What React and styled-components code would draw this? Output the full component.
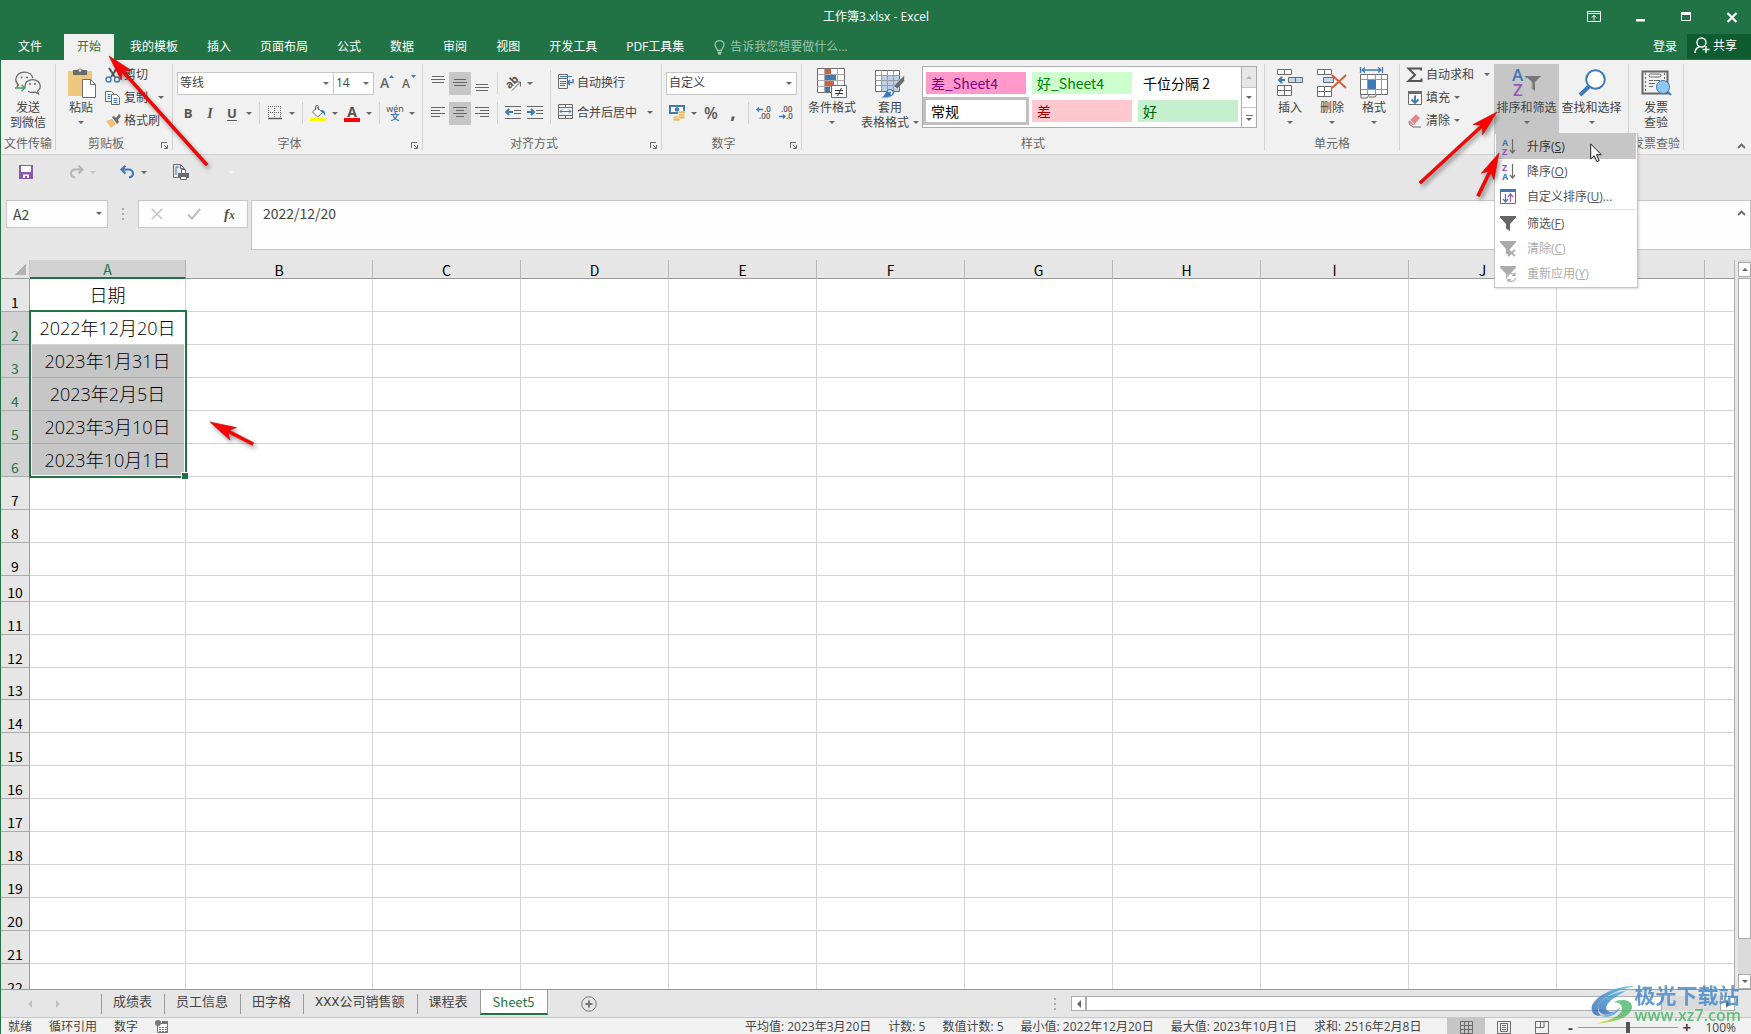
import React from 'react';
import styled, { createGlobalStyle, css } from 'styled-components';

const GREEN = '#217346';
const BLUE = '#3f7ab5';
const GREY = '#6b6b6b';

const GlobalStyle = createGlobalStyle`
  * {
    box-sizing: border-box;
  }

  body {
    margin: 0;
    overflow: hidden;
    color: #444;
    font-family: 'Open Sans', 'Noto Sans CJK SC', sans-serif;
    font-size: 12px;
    line-height: 15px;
  }

  button, input, select, textarea {
    margin: 0;
    padding: 0;
    border: 0;
    border-radius: 0;
    outline: 0;
    background: none;
    color: inherit;
    font: inherit;
  }

  svg {
    display: block;
    flex-shrink: 0;
    overflow: visible;
  }
`;

/* ---------- icons ---------- */

const Icon = ({ w = 16, h = 16, children, ...rest }) => (
  <svg width={w} height={h} viewBox={`0 0 ${w} ${h}`} fill="none" aria-hidden="true" {...rest}>
    {children}
  </svg>
);

const WechatIcon = () => (
  <Icon w={26} h={24} stroke={GREY} strokeWidth="1.3">
    <path d="M4 14.5C1.500 12.500 .8 10.500.8 8.500.8 4.300 4.500 1.200 9.300 1.200c4.300 0 7.700 2.500 8.500 6" />
    <path d="M2.800 13.800L2 16.500" />
    <path d="M13 20.200c1.200.8 2.800 1.300 4.500 1.300 1 0 1.800-.1 2.700-.4l3.300 1.700-.8-2.800c1.700-1.200 2.600-2.900 2.600-4.800 0-3.700-3.400-6.600-7.700-6.600s-7.700 2.900-7.700 6.600c0 .8.1 1.400.3 2" />
    <path d="M0 17h9.500M6.500 13.800L9.800 17l-3.300 3.200" stroke="#3fa05a" />
    <g fill={GREY} stroke="none">
      <circle cx="6.500" cy="6.500" r="1" />
      <circle cx="12" cy="6.500" r="1" />
      <circle cx="15" cy="13" r="1" />
      <circle cx="20" cy="13" r="1" />
    </g>
  </Icon>
);

const PasteIcon = () => (
  <Icon w={29} h={32}>
    <path d="M1 4h24v25H1z" fill="#eec77f" />
    <path d="M6 3h4.500a2.800 2.800 0 015 0H20v5H6z" fill="#6b6b6b" />
    <circle cx="13" cy="3.500" r="1.200" fill="#f1f1f1" />
    <path d="M15.500 12.500h8l5 5v13h-13z" fill="#fff" stroke={GREY} />
    <path d="M23.500 12.500v5h5" stroke={GREY} />
  </Icon>
);

const CutIcon = () => (
  <Icon>
    <path d="M4 1l6 9M12 1L6 10" stroke="#555" strokeWidth="2" />
    <circle cx="3.500" cy="12.500" r="2.500" stroke={BLUE} strokeWidth="1.400" />
    <circle cx="12" cy="12.500" r="2.500" stroke={BLUE} strokeWidth="1.400" />
  </Icon>
);

const CopyIcon = () => (
  <Icon>
    <path d="M.5 1.500h6l2 2v8h-8z" fill="#fff" stroke={GREY} />
    <path d="M2.500 4.500h3M2.500 6.500h3M2.500 8.500h3" stroke={BLUE} />
    <path d="M6.500 4.500h5l3 3v7h-8z" fill="#fff" stroke={GREY} />
    <path d="M8.500 8.500h4M8.500 10.500h4M8.500 12.500h4" stroke={BLUE} />
  </Icon>
);

const BrushIcon = () => (
  <Icon>
    <path d="M1 8l6-2 4 5-5 4z" fill="#eec077" />
    <path d="M7 4l2-1 2 2 3-4 2 2-3 4 1 2-2 2z" fill={GREY} />
  </Icon>
);

const LauncherIcon = () => (
  <Icon w={7} h={7} stroke={GREY}>
    <path d="M.5 6V.5H6M3 3l3 3M6.500 3v3.500H3" />
  </Icon>
);

const BorderIcon = () => (
  <Icon w={14} h={14} stroke="#666">
    <path d="M.5 0v12M6.500 0v12M12.500 0v12M0 .5h13M0 6.500h13" strokeDasharray="1 1" />
    <path d="M0 12.500h14" stroke="#555" strokeWidth="1.400" />
  </Icon>
);

const FillIcon = () => (
  <Icon>
    <path d="M7 2.500l5.500 5-5 4.500L2.500 7z" fill="#fff" stroke={GREY} />
    <path d="M5.500 5V2a1.500 1.500 0 013 0v3" stroke={GREY} />
    <path d="M11 5c3-.5 5 2 4 6-1-1.500-1-3-3-3.500z" fill={BLUE} />
    <path d="M0 12.500h16v3.500H0z" fill="#ff0" />
  </Icon>
);

const LinesIcon = ({ lines }) => (
  <Icon w={14} h={16} stroke="#666">
    {lines.map(([x1, x2, y]) => (
      <path key={y} d={`M${x1} ${y + 0.5}H${x2}`} />
    ))}
  </Icon>
);

const OrientationIcon = () => (
  <Icon>
    <text x="1" y="10" fontSize="11" fontWeight="700" fill="#555" transform="rotate(-45 8 8)">ab</text>
    <path d="M7 15.500L15 7.500M11 7h4.500v4.500" stroke={GREY} />
  </Icon>
);

const IndentIcon = ({ flip }) => (
  <Icon>
    <path d="M0 1.500h16M9 5.500h7M9 8.500h7M0 13.500h16" stroke="#666" />
    <path d={flip ? 'M0 7h7M4 4l3.200 3L4 10' : 'M1 7h7M4.200 4L1 7l3.200 3'} stroke={BLUE} strokeWidth="1.800" />
  </Icon>
);

const WrapIcon = () => (
  <Icon>
    <path d="M.5.5h9v14h-9zM.5 4.500h9M2 7.500h6M2 9.500h6M2 11.500h5" stroke={GREY} />
    <path d="M2 2.500h12" stroke={BLUE} />
    <path d="M15 5v3.500H10M12 6L9.500 8.500 12 11" stroke={BLUE} strokeWidth="1.400" />
  </Icon>
);

const MergeIcon = () => (
  <Icon>
    <path d="M.5.500h14v14H.5zM.5 3.500h14M.5 11.500h14M7.500.5v3M7.500 11.500v3" stroke={GREY} />
    <path d="M2 7.500h11M4 5.500l-2 2 2 2M11 5.500l2 2-2 2" stroke={BLUE} />
  </Icon>
);

const CurrencyIcon = () => (
  <Icon>
    <path d="M0 0h16v9H0z" fill={BLUE} />
    <path d="M2 2h12v5H2z" fill="#fff" />
    <circle cx="8" cy="4.500" r="2.200" fill={BLUE} />
    <g fill="#e8b969" stroke="#f1f1f1" strokeWidth=".6">
      <rect x="9" y="6" width="7" height="3" rx="1.500" />
      <rect x="9" y="8.500" width="7" height="3" rx="1.500" />
      <rect x="4" y="11" width="7" height="3" rx="1.500" />
      <rect x="9" y="11" width="7" height="3" rx="1.500" />
      <rect x="4" y="13" width="7" height="3" rx="1.500" />
    </g>
  </Icon>
);

const DecimalIcon = ({ less }) => (
  <Icon>
    <g fontSize="8" fontWeight="600" fill="#555">
      <text x={less ? 3 : 8} y="7">{less ? '.00' : '.0'}</text>
      <text x={less ? 8 : 3} y="14">{less ? '.0' : '.00'}</text>
    </g>
    <path
      d={less ? 'M1 11.500h6M5 9.500l2 2-2 2' : 'M1 4.500h6M3 2.500l-2 2 2 2'}
      stroke={BLUE}
      strokeWidth="1.400"
    />
  </Icon>
);

const CondFormatIcon = () => (
  <Icon w={30} h={30}>
    <path d="M.5.5h27v24H.5z" fill="#fff" stroke={GREY} />
    <path d="M.5 6.500h27M.5 12.500h27M.5 18.500h27M7.500.5v24M20.500.5v24" stroke="#aaa" />
    <path d="M8 1h6v5H8zM8 13h9v5H8z" fill="#d65f3d" />
    <path d="M8 7h11v5H8zM8 19h5v5H8z" fill={BLUE} />
    <path d="M14.500 17.500h15v12h-15z" fill="#fff" stroke={GREY} />
    <path d="M18 22.500h8M18 25.500h8M24.500 20l-4 8" stroke="#333" />
  </Icon>
);

const TableFormatIcon = () => (
  <Icon w={30} h={30}>
    <path d="M.5 2.500h24v21H.5z" fill="#fff" stroke={GREY} />
    <path d="M7 8h17v15H7z" fill="#bcd0e8" />
    <path d="M.5 7.500h24M.5 12.500h24M.5 17.500h24M6.500 2.500v21M12.500 2.500v21M18.500 2.500v21" stroke="#999" />
    <path d="M29.500 7v6l-7 8-4-3z" fill={GREY} stroke="#f1f1f1" strokeWidth=".6" />
    <path d="M6 29.500c5-1 4-8.500 9-8.500 4 0 5 4 3 6-3 3-8 2.500-12 2.500z" fill={BLUE} />
    <path d="M13 23.500c3-1.500 5 0 3 3" stroke="#fff" strokeWidth="1.400" />
  </Icon>
);

const InsertCellsIcon = () => (
  <Icon w={27} h={28}>
    <path d="M.5.5h14v5H.5zM7.500.5v5M.5 16.500h14v10H.5zM7.500 16.500v10M.5 21.500h14" fill="#fff" stroke={GREY} />
    <path d="M11.500 8.500h14v5h-14zM18.500 8.500v5" fill="#c3d8ec" stroke={GREY} />
    <path d="M2 11h6M5 8l-3 3 3 3" stroke={BLUE} strokeWidth="2" />
  </Icon>
);

const DeleteCellsIcon = () => (
  <Icon w={30} h={28}>
    <path d="M.5.5h14v5H.5zM7.500.5v5M.5 17.500h14v10H.5zM7.500 17.500v10M.5 22.500h14" fill="#fff" stroke={GREY} />
    <path d="M6.500 8.500h10v5h-10z" fill="#c3d8ec" stroke={GREY} />
    <path d="M15 6l14 13M29 6L15 19" stroke="#d65f3d" strokeWidth="2" />
  </Icon>
);

const FormatCellsIcon = () => (
  <Icon w={28} h={32}>
    <path d="M.5 0v6M22.500 0v6M2 3h19M5 .500L2 3l3 2.500M18 .500L21 3l-3 2.500" stroke={BLUE} strokeWidth="1.300" />
    <path d="M.5 7.500h27v20H.5z" fill="#fff" stroke={GREY} />
    <path d="M.5 12.500h27M.5 22.500h27M7.500 7.500v20M15.500 7.500v20M21.500 7.500v20" stroke="#999" />
    <path d="M8 13h8v9H8z" fill={BLUE} />
    <path d="M1 27v4h6l2-3M9 30h6l2-3" stroke={GREY} />
  </Icon>
);

const SigmaIcon = () => (
  <Icon>
    <path d="M14 3.500V1.500H1.500L8 8l-6.500 6H14.500V11.500" stroke="#555" strokeWidth="2" />
  </Icon>
);

const FillDownIcon = () => (
  <Icon>
    <path d="M1.500 1.500h13v13h-13z" fill="#fff" stroke={GREY} />
    <path d="M1 1h14v3H1z" fill={GREY} />
    <path d="M8 5.500v8M4.500 9.500L8 13l3.500-3.500" stroke={BLUE} strokeWidth="1.900" />
  </Icon>
);

const EraserIcon = () => (
  <Icon>
    <path d="M9 1.500l4 3.500-6 7-5-1-1-2z" fill="#e5838f" />
    <path d="M3 7l4 4" stroke="#f1f1f1" />
    <path d="M2 11l4 3h8" stroke={GREY} />
  </Icon>
);

const FUNNEL = 'M0 0h16v1.500L10 8v7L6 12.500V8L0 1.500z';

const SortFilterIcon = () => (
  <Icon w={30} h={30}>
    <g fontSize="17" fontWeight="600">
      <text x="0" y="13" fill={BLUE}>A</text>
      <text x="1" y="28" fill="#9158b4">Z</text>
    </g>
    <path d="M12 8h17l-6 6v9l-3.500-3v-6z" fill="#767676" />
    <path d="M15 10l5 4.500v5" stroke="#c6c6c6" />
  </Icon>
);

const FindIcon = () => (
  <Icon w={28} h={28} stroke={BLUE}>
    <circle cx="17.500" cy="10.500" r="9.300" fill="#fff" strokeWidth="2" />
    <path d="M11 17.500L2 26" strokeWidth="4" />
  </Icon>
);

const InvoiceIcon = () => (
  <Icon w={31} h={28}>
    <path d="M1.500 2.500h25v22H1.500z" stroke="#666" strokeWidth="2" />
    <path d="M4.500 4v20M23.500 4v20" stroke="#666" strokeDasharray="2 2" />
    <rect x="8" y="5" width="12" height="3" rx="1.500" stroke="#666" />
    <path d="M8 11.500h4M13 11.500h6M8 14.500h6M8 17.500h4" stroke="#666" />
    <circle cx="22" cy="18" r="6.500" fill="#8fc6f4" stroke={BLUE} />
    <path d="M27 23l3 3" stroke={BLUE} strokeWidth="2" />
  </Icon>
);

const SortIcon = ({ top, bottom, topColor, bottomColor }) => (
  <Icon>
    <g fontSize="9" fontWeight="700">
      <text x="2" y="7" fill={topColor}>{top}</text>
      <text x="2" y="16" fill={bottomColor}>{bottom}</text>
    </g>
    <path d="M12.500 0v14M10 11l2.500 3 2.500-3" stroke={GREY} strokeWidth="1.200" />
  </Icon>
);

const CustomSortIcon = () => (
  <Icon>
    <path d="M.5.500h15v14H.5z" fill="#fff" stroke={GREY} />
    <path d="M0 0h16v3H0z" fill={BLUE} />
    <path d="M5.500 5v8M3 10l2.500 3L8 10" stroke={BLUE} strokeWidth="1.200" />
    <path d="M10.500 13V5M8 8l2.500-3L13 8" stroke="#9158b4" strokeWidth="1.200" />
  </Icon>
);

const FunnelIcon = ({ kind }) => (
  <Icon>
    <path d={FUNNEL} fill={kind ? '#ababab' : '#666'} />
    {kind === 'clear' && <path d="M8 9l7 6M15 9l-7 6" stroke="#ababab" strokeWidth="1.800" />}
    {kind === 'reapply' && (
      <>
        <circle cx="11.500" cy="11.500" r="4.500" fill="#fff" />
        <path d="M7.500 11a4 4 0 017-2M15.500 12a4 4 0 01-7 2M15 6.500v3h-3M8 16.500v-3h3" stroke="#ababab" strokeWidth="1.200" />
      </>
    )}
  </Icon>
);

const BulbIcon = () => (
  <Icon w={11} h={15} stroke="#9cc4ad" strokeWidth="1.300">
    <path d="M3.500 10.500C3.500 8.500 1 7.500 1 4.800a4.500 4.200 0 019 0c0 2.700-2.500 3.700-2.500 5.700zM3.500 12.500h4M4 14h3" />
  </Icon>
);

const ShareIcon = () => (
  <Icon w={16} h={17} stroke="#fff" strokeWidth="1.400">
    <circle cx="7.500" cy="5.500" r="4.500" />
    <path d="M1 16c0-3 1.500-5 4-6M12 9v7M8.500 12.500h7" />
  </Icon>
);

const RibbonOptionsIcon = () => (
  <Icon w={14} h={11} stroke="#fff">
    <path d="M.5.500h13v10H.5zM.5 2.500h13M7 9.500V4.500M4.800 6.500L7 4.300l2.200 2.200" />
  </Icon>
);

const MinimizeIcon = () => (
  <Icon w={14} h={14}><path d="M3 9h9v2.500H3z" fill="#fff" /></Icon>
);

const MaximizeIcon = () => (
  <Icon w={14} h={14}>
    <path d="M2.500 2.500h9v8h-9z" stroke="#fff" />
    <path d="M2 2h10v3H2z" fill="#fff" />
  </Icon>
);

const CloseIcon = () => (
  <Icon w={14} h={14} stroke="#fff" strokeWidth="2.200"><path d="M2.500 3l9 9M11.500 3l-9 9" /></Icon>
);

const SaveIcon = () => (
  <Icon w={14} h={14}>
    <path d="M0 0h14v14H0z" fill="#8b56ae" />
    <path d="M2 1h10v6H2zM4 9.500h6V13H8v-2H6v2H4z" fill="#fff" />
  </Icon>
);

const UndoIcon = () => (
  <Icon w={15} h={14} stroke={BLUE} strokeWidth="2.200">
    <path d="M1 4.500h8a4 4 0 014 4c0 2-1.500 3.500-4 4M5.500.800L1.500 4.500l4 4" />
  </Icon>
);

const RedoIcon = () => (
  <Icon w={15} h={14} stroke="#b4b4b4" strokeWidth="2">
    <path d="M14 4.500H6a4 4 0 00-4 4c0 2 1.500 3.500 4 4M9.500.800L13.500 4.500l-4 4" />
  </Icon>
);

const PreviewIcon = () => (
  <Icon w={16} h={17}>
    <path d="M5 13.500H.5v-13h7l4 4M7.500.500v4h4" stroke={GREY} />
    <path d="M3 11V3h3" stroke={BLUE} />
    <path d="M8.500 5.500h4v4h-4z" fill="#fff" stroke={GREY} />
    <path d="M5 9h11v5H5z" fill={GREY} />
    <path d="M7.500 12.500h6v3h-6z" fill="#fff" stroke={GREY} />
  </Icon>
);

const CrossIcon = () => (
  <Icon w={12} h={12} stroke="#c2c2c2" strokeWidth="1.500"><path d="M1 1l10 10M11 1L1 11" /></Icon>
);

const CheckIcon = () => (
  <Icon w={14} h={12} stroke="#c2c2c2" strokeWidth="2.200"><path d="M1 6.500l4 4L13 1" /></Icon>
);

const ChevronUpIcon = () => (
  <Icon w={9} h={6} stroke={GREY} strokeWidth="1.800"><path d="M1 5l3.500-3.500L8 5" /></Icon>
);

const PlusCircleIcon = () => (
  <Icon w={16} h={16} stroke="#777">
    <circle cx="8" cy="8" r="7.300" />
    <path d="M8 4.500v7M4.500 8h7" strokeWidth="2" />
  </Icon>
);

const MacroIcon = () => (
  <Icon w={13} h={13}>
    <path d="M2.500 3.500h10v9h-10z" fill="#fff" stroke="#777" />
    <path d="M7 1h6v3H7z" fill="#777" />
    <circle cx="3" cy="3" r="3" fill="#777" />
    <path d="M4 7.500h8M4 9.500h8M4 11.500h8" stroke="#777" strokeDasharray="2 1" />
  </Icon>
);

const NormalViewIcon = () => (
  <Icon w={13} h={13} stroke={GREY}><path d="M.5.500h12v12H.5zM4.500.500v12M8.500.500v12M.5 4.500h12M.5 8.500h12" /></Icon>
);

const LayoutViewIcon = () => (
  <Icon w={14} h={13} stroke={GREY}><path d="M.5.500h13v12H.5zM3.500 2.500h7v8h-7zM5 4.500h4M5 6.500h4M5 8.500h4" /></Icon>
);

const BreakViewIcon = () => (
  <Icon w={14} h={13} stroke={GREY}><path d="M.5.500h13v12H.5zM5.500.500v6M.5 6.500h8.500V.5" /></Icon>
);

const PointerIcon = () => (
  <Icon w={12} h={20}>
    <path d="M.7 1v15l3.500-3.300 2.600 6 2.400-1-2.600-6h4.800z" fill="#fff" stroke="#1c1c2c" />
  </Icon>
);

/* ---------- shared parts ---------- */

const Caret = styled.span`
  flex-shrink: 0;
  width: 0;
  height: 0;
  border: 3px solid transparent;
  border-top-color: ${({ $color }) => $color || '#666'};
  border-bottom-width: 0;
`;

const Frame = styled.div`
  position: relative;
  display: flex;
  flex-direction: column;
  height: 100vh;
  overflow: hidden;
  border-left: 1px solid ${GREEN};
  background: #e6e6e6;
`;

/* ---------- title and tabs ---------- */

const TitleBar = styled.header`
  display: grid;
  grid-template-columns: 1fr auto 1fr;
  align-items: center;
  height: 34px;
  padding-bottom: 1px;
  background: ${GREEN};
  color: #fff;
`;

const Title = styled.h1`
  margin: 0;
  font-size: 12px;
  font-weight: 400;
  grid-column: 2;
`;

const WindowButtons = styled.div`
  display: flex;
  justify-content: flex-end;
  align-items: center;
  gap: 32px;
  padding-right: 12px;
`;

const TabBar = styled.nav`
  display: flex;
  gap: 3px;
  height: 26px;
  padding-left: 4px;
  background: ${GREEN};
  color: #fff;
`;

const Tab = styled.button`
  padding: 0 13px 2px;
  white-space: nowrap;
  ${({ $file }) => $file && 'margin-right: 6px;'}
  ${({ $active }) => $active && css`
    background: #f1f1f1;
    color: ${GREEN};
  `}
`;

const TellMe = styled.label`
  display: flex;
  align-items: center;
  gap: 5px;
  flex: 1;
  padding-left: 14px;

  input {
    width: 140px;
    padding-bottom: 1px;
  }

  input::placeholder {
    color: #9cc4ad;
    opacity: 1;
  }
`;

const SignIn = styled.button`
  padding: 0 7px 2px;
`;

const Share = styled.button`
  display: flex;
  align-items: center;
  gap: 3px;
  width: 64px;
  height: 25px;
  padding: 0 0 2px 7px;
  background: #0e5c2f;
`;

/* ---------- ribbon ---------- */

const Ribbon = styled.section`
  display: flex;
  height: 95px;
  padding: 4px 0;
  border-bottom: 1px solid #d2d2d2;
  background: #f1f1f1;
`;

const GroupBox = styled.div`
  display: flex;
  flex-direction: column;
  flex-shrink: 0;
  width: ${({ $width }) => $width}px;
  border-right: 1px solid #d2d2d2;
`;

const GroupBody = styled.div`
  display: flex;
  align-items: flex-start;
  height: 70px;
  padding-left: ${({ $inset }) => $inset}px;
`;

const GroupFooter = styled.div`
  display: flex;
  align-items: center;
  height: 16px;
  padding-top: 3px;
  color: #666;

  span {
    flex: 1;
    text-align: center;
    white-space: nowrap;
  }

  button {
    width: 16px;
    padding: 4px 0 0 5px;
  }
`;

const Group = ({ width, label, launcher, inset = 4, children }) => (
  <GroupBox $width={width}>
    <GroupBody $inset={inset}>{children}</GroupBody>
    <GroupFooter>
      <span>{label}</span>
      {launcher && <button aria-label={`${label}设置`}><LauncherIcon /></button>}
    </GroupFooter>
  </GroupBox>
);

const BigButtonBox = styled.button`
  display: flex;
  flex-direction: column;
  align-items: center;
  width: ${({ $width }) => $width}px;
  height: 69px;
  padding-top: 3px;
  white-space: nowrap;
  background: ${({ $active }) => ($active ? '#c6c6c6' : 'transparent')};
`;

const BigIcon = styled.span`
  display: flex;
  align-items: center;
  height: 32px;
  margin-bottom: 1px;
`;

const BigLine = styled.span`
  display: flex;
  align-items: center;
  gap: 4px;
  height: 15px;
`;

const BigButton = ({ icon, line1, line2, caret, ...rest }) => (
  <BigButtonBox {...rest}>
    <BigIcon>{icon}</BigIcon>
    <BigLine>{line1}</BigLine>
    <BigLine>{line2}{caret && <Caret />}</BigLine>
  </BigButtonBox>
);

const Stack = styled.div`
  display: flex;
  flex-direction: column;
  width: ${({ $width }) => ($width ? `${$width}px` : 'auto')};
  padding-top: ${({ $top }) => $top || 0}px;
`;

const SmallButton = styled.button`
  display: flex;
  align-items: center;
  gap: 3px;
  height: 23px;
  padding: 0 3px 2px ${({ $left = 3 }) => $left}px;
  white-space: nowrap;

  ${Caret} {
    margin-left: ${({ $gap = 1 }) => $gap}px;
  }
`;

const ToolRow = styled.div`
  display: flex;
  align-items: center;
  height: 30px;
`;

const Tool = styled.button`
  display: flex;
  align-items: center;
  justify-content: center;
  width: 22px;
  height: 23px;
  background: ${({ $active }) => ($active ? '#c6c6c6' : 'transparent')};
`;

const CaretTool = styled(Tool)`
  width: 12px;
`;

const Divider = styled.span`
  flex-shrink: 0;
  width: 1px;
  height: ${({ $height = 22 }) => $height}px;
  margin: 0 4px;
  background: #d2d2d2;
`;

const Combo = styled.label`
  display: flex;
  align-items: center;
  width: ${({ $width }) => $width}px;
  height: 23px;
  padding: 0 4px 0 2px;
  border: 1px solid #c6c6c6;
  background: #fff;

  & + & {
    border-left: 0;
  }

  select {
    flex: 1;
    min-width: 0;
    padding-bottom: 2px;
    appearance: none;
  }
`;

const Letter = styled.span`
  font-size: ${({ $size = 13 }) => $size}px;
  font-weight: 700;
  color: #555;
  ${({ $italic }) => $italic && "font-style: italic; font-family: 'Liberation Serif', serif;"}
  ${({ $underline }) => $underline && 'text-decoration: underline; text-underline-offset: 2px;'}
`;

const FontSizeGlyph = ({ size, down }) => (
  <Icon w={16} h={18}>
    <text x="3" y="14" fontSize={size} fontWeight="600" fill="#666">A</text>
    <path d={down ? 'M12 1h5l-2.500 3z' : 'M12 4h5l-2.500-3z'} fill={BLUE} />
  </Icon>
);

const FontColor = styled.span`
  width: 16px;
  border-bottom: 4px solid #f00;
  font-size: 14px;
  font-weight: 700;
  line-height: 13px;
  text-align: center;
  color: #555;
`;

const Phonetic = styled.span`
  display: flex;
  flex-direction: column;
  font-size: 9px;
  line-height: 8px;

  b {
    color: ${BLUE};
  }
`;

const NumberSign = styled.span`
  font-size: 16px;
  font-weight: ${({ $bold }) => ($bold ? 800 : 600)};
  line-height: ${({ $bold }) => ($bold ? 10 : 16)}px;
  color: #555;
`;

const Gallery = styled.div`
  display: flex;
  width: 335px;
  height: 62px;
  margin-top: 2px;
  border: 1px solid #ababab;
  background: #fff;
`;

const StyleGrid = styled.div`
  display: grid;
  grid-template-columns: repeat(3, 1fr);
  gap: 6px;
  flex: 1;
  padding: 5px 3px 5px 3px;
`;

const StyleCell = styled.button`
  padding-left: 5px;
  background: ${({ $bg }) => $bg || '#fff'};
  color: ${({ $fg }) => $fg || '#000'};
  font-size: 14px;
  font-family: 'Noto Sans CJK SC', sans-serif;
  line-height: 20px;
  text-align: left;
  white-space: nowrap;
  ${({ $selected }) => $selected && 'box-shadow: 0 0 0 3px #c0c0c0;'}
`;

const GallerySide = styled.div`
  display: grid;
  grid-template-rows: repeat(3, 1fr);
  width: 15px;
  border-left: 1px solid #ababab;

  button {
    display: flex;
    flex-direction: column;
    align-items: center;
    justify-content: center;
    gap: 2px;
  }

  button + button {
    border-top: 1px solid #c6c6c6;
  }

  button:disabled {
    background: #e6e6e6;
  }
`;

const UpCaret = styled(Caret)`
  border-top-width: 0;
  border-bottom: 3px solid ${({ $color }) => $color || '#666'};
  border-top-color: transparent;
`;

const Bar = styled.i`
  width: 7px;
  height: 1px;
  background: #777;
`;

const MenuAnchor = styled.div`
  position: relative;
  z-index: 5;
`;

const Menu = styled.div`
  position: absolute;
  top: 100%;
  left: 0;
  width: 144px;
  padding: 0 1px 1px;
  border: 1px solid #c6c6c6;
  background: #fff;
  box-shadow: 1px 1px 2px rgba(0, 0, 0, 0.15);
`;

const MenuItem = styled.button`
  display: flex;
  align-items: center;
  gap: 11px;
  width: 100%;
  height: 25px;
  padding-left: 4px;
  text-align: left;
  background: ${({ $hover }) => ($hover ? '#c6c6c6' : 'transparent')};
  color: ${({ $hover }) => ($hover ? '#333' : '#555')};

  &:disabled {
    color: #ababab;
  }
`;

const MenuLine = styled.div`
  height: 1px;
  margin: 0 0 1px 31px;
  background: #e1e1e1;
`;

const Pointer = styled.span`
  position: absolute;
  top: 9px;
  left: 95px;
`;

const CollapseButton = styled.button`
  margin: auto 5px 1px auto;
`;

/* ---------- quick access and formula bar ---------- */

const QuickBar = styled.div`
  display: grid;
  grid-template-columns: 50px 51px 54px 55px auto;
  justify-content: start;
  align-items: center;
  height: 34px;
  padding-left: 14px;
`;

const QuickItem = styled.div`
  display: flex;
  align-items: center;
`;

const FormulaBar = styled.section`
  display: flex;
  align-items: flex-start;
  padding: 11px 0 10px 5px;
  font-family: 'Noto Sans CJK SC', sans-serif;
  font-size: 14px;
`;

const NameBox = styled.div`
  display: flex;
  align-items: center;
  width: 102px;
  height: 28px;
  padding: 0 5px 1px 6px;
  border: 1px solid #c6c6c6;
  background: #fdfdfd;

  input {
    flex: 1;
    min-width: 0;
    line-height: 20px;
  }
`;

const Grip = styled.span`
  width: 2px;
  height: 12px;
  margin: ${({ $margin }) => $margin};
  background: repeating-linear-gradient(#aaa 0 2px, transparent 2px 5px);
`;

const FormulaButtons = styled.div`
  display: flex;
  align-items: center;
  justify-content: space-between;
  width: 110px;
  height: 28px;
  padding: 0 12px;
  border: 1px solid #c6c6c6;
  background: #fdfdfd;
`;

const Fx = styled.button`
  font: italic 700 15px 'Liberation Serif', serif;
  color: #555;

  sub {
    font-size: 12px;
    vertical-align: baseline;
  }
`;

const FormulaField = styled.div`
  display: flex;
  align-items: flex-start;
  flex: 1;
  height: 50px;
  margin-left: 3px;
  padding: 2px 4px 0 11px;
  border: 1px solid #c6c6c6;
  background: #fdfdfd;

  textarea {
    flex: 1;
    height: 42px;
    line-height: 20px;
    resize: none;
    overflow: hidden;
  }

  button {
    padding: 7px 0;
  }
`;

/* ---------- sheet ---------- */

const SheetArea = styled.main`
  display: flex;
  flex: 1;
  min-height: 0;
  overflow: hidden;
  border-bottom: 1px solid #999;
`;

const GridClip = styled.div`
  flex: 1;
  margin-right: 3px;
  overflow: hidden;
`;

const Grid = styled.table`
  width: 100%;
  table-layout: fixed;
  border-collapse: separate;
  border-spacing: 0;
  font-family: 'Noto Sans CJK SC', sans-serif;
  color: #000;

  th, td {
    padding: 0;
    font-weight: 400;
  }
`;

const Corner = styled.th`
  height: 19px;
  border-right: 1px solid #c6c6c6;
  border-bottom: 1px solid #999;
  background: linear-gradient(135deg, #e6e6e6 50%, #b4b4b4 50%) right 3px bottom 3px / 11px 11px no-repeat;
`;

const ColumnHead = styled.th`
  height: 19px;
  border-right: 1px solid #b4b4b4;
  border-bottom: 1px solid #999;
  font-size: 14px;
  line-height: 16px;
  vertical-align: bottom;
  ${({ $selected }) => $selected && css`
    border-bottom: 2px solid ${GREEN};
    background: #d2d2d2;
    color: ${GREEN};
  `}
`;

const RowHead = styled.th`
  height: ${({ $height }) => $height}px;
  border-right: 1px solid #999;
  border-bottom: 1px solid #ababab;
  background: ${({ $selected }) => ($selected ? '#d2d2d2' : '#e6e6e6')};
  color: ${({ $selected }) => ($selected ? GREEN : '#000')};
  font-size: 14px;
  line-height: 17px;
  vertical-align: bottom;
`;

const Cell = styled.td`
  position: relative;
  border-right: 1px solid #d4d4d4;
  border-bottom: 1px solid ${({ $shaded }) => ($shaded ? '#ababab' : '#d4d4d4')};
  background: ${({ $shaded }) => ($shaded ? '#c6c6c6' : '#fff')};
  font-family: 'Open Sans', 'Noto Sans CJK SC', sans-serif;
  font-size: 18px;
  line-height: 26px;
  text-align: center;
  white-space: nowrap;

  ${Grid} & {
    font-weight: 300;
  }

  &:last-child {
    border-right-color: #ababab;
  }
`;

/* outlines A2:A6, five rows of 33px */
const Selection = styled.span`
  position: absolute;
  z-index: 1;
  top: -2px;
  left: -1px;
  right: -2px;
  height: 168px;
  border: 2px solid ${GREEN};
  box-shadow: inset 0 0 0 1px #fff;

  &::after {
    content: '';
    position: absolute;
    right: -3px;
    bottom: -3px;
    width: 6px;
    height: 6px;
    border: 1px solid #fff;
    border-width: 1px 0 0 1px;
    background: ${GREEN};
  }
`;

const ScrollY = styled.div`
  display: flex;
  flex-direction: column;
  width: 13px;
  padding-top: 2px;
  background: #dadada;
`;

const ScrollX = styled.div`
  display: flex;
  flex: 0 1 664px;
  height: 15px;
  margin-right: 16px;
  background: #dadada;
`;

const ScrollButton = styled.button`
  display: flex;
  flex-shrink: 0;
  align-items: center;
  justify-content: center;
  width: 15px;
  height: 15px;
  border: 1px solid #ababab;
  background: #fff;

  ${ScrollY} & {
    width: 13px;
  }
`;

const Thumb = styled.div`
  flex: 1;
  margin: ${({ $margin }) => $margin};
  border: 1px solid #ababab;
  background: #fff;
`;

const SideCaret = styled.span`
  width: 0;
  height: 0;
  border: 4px solid transparent;
  ${({ $dir, $color = '#666' }) =>
    ($dir === 'left'
      ? `border-left-width: 0; border-right-color: ${$color};`
      : `border-right-width: 0; border-left-color: ${$color};`)}
`;

/* ---------- sheet tabs and status ---------- */

const SheetBar = styled.footer`
  display: flex;
  align-items: center;
  height: 27px;
`;

const SheetNav = styled.div`
  display: flex;
  align-items: center;
  gap: 24px;
  width: 100px;
  padding-left: 27px;
`;

const SheetTab = styled.button`
  height: 20px;
  padding: 0 12px 4px 11px;
  border-left: 1px solid #999;
  font-family: Roboto, 'Noto Sans CJK SC', sans-serif;
  font-size: 13px;
  line-height: 16px;
  white-space: nowrap;
  ${({ $active }) => $active && css`
    align-self: flex-start;
    height: 25px;
    padding: 0 12px;
    border-right: 1px solid #999;
    border-bottom: 2px solid ${GREEN};
    background: #fff;
    color: ${GREEN};
    font-family: 'Noto Sans CJK SC', sans-serif;
  `}
`;

const AddSheet = styled.button`
  margin: 0 auto 0 33px;
`;

const StatusBar = styled.footer`
  display: flex;
  align-items: center;
  height: 17px;
  border-top: 1px solid #c6c6c6;
  background: #f1f1f1;
  white-space: nowrap;
`;

const StatusLeft = styled.div`
  display: flex;
  align-items: center;
  gap: 17px;
  flex: 1;
  padding-left: 7px;
`;

const Stats = styled.div`
  display: flex;
  gap: 17px;
  margin-right: 26px;
`;

const ViewButton = styled.button`
  display: flex;
  justify-content: center;
  align-items: center;
  width: 38px;
  height: 16px;
  padding-top: 3px;
  background: ${({ $active }) => ($active ? '#c6c6c6' : 'transparent')};
`;

const ZoomControl = styled.div`
  display: flex;
  align-items: center;
  gap: 4px;
  padding: 2px 15px 0 5px;

  button {
    width: 8px;
    font-size: 15px;
    font-weight: 700;
    line-height: 14px;
  }

  input {
    width: 100px;
    height: 12px;
    appearance: none;
    background: linear-gradient(#999, #999) center / 100% 1px no-repeat;
  }

  input::-webkit-slider-thumb {
    appearance: none;
    width: 4px;
    height: 11px;
    background: #555;
  }

  output {
    margin-left: 11px;
  }
`;

/* ---------- overlays ---------- */

const Annotations = styled.svg`
  position: absolute;
  z-index: 8;
  inset: 0;
  width: 100%;
  height: 100%;
  pointer-events: none;
  filter: drop-shadow(2px 3px 2px rgba(0, 0, 0, 0.4));
`;

const Watermark = styled.div`
  position: absolute;
  z-index: 9;
  right: 10px;
  bottom: 8px;
  display: flex;
  align-items: center;
  gap: 1px;
  opacity: 0.8;
  pointer-events: none;
`;

const WatermarkText = styled.div`
  color: #4186c8;
  font-family: 'Noto Sans CJK SC', sans-serif;
  font-size: 21px;
  font-weight: 700;
  line-height: 21px;

  small {
    display: block;
    color: #3fb560;
    font-family: 'Open Sans', sans-serif;
    font-size: 16px;
    font-weight: 600;
    line-height: 21px;
  }
`;

const Arrow = ({ from, to }) => {
  const [x1, y1] = from;
  const [x2, y2] = to;
  const length = Math.hypot(x2 - x1, y2 - y1);
  const angle = (Math.atan2(y2 - y1, x2 - x1) * 180) / Math.PI;
  return (
    <path
      d={`M0 0L-26 -7L-21 -1.500H${-length}V1.500H-21L-26 7Z`}
      transform={`translate(${x2} ${y2}) rotate(${angle})`}
      fill="#ff0000"
      stroke="#c01010"
      strokeWidth=".6"
    />
  );
};

const SwirlLogo = () => (
  <svg width="43" height="40" viewBox="0 0 130 120" aria-hidden="true">
    <defs>
      <linearGradient id="swirlBlue" x1="0" y1="1" x2="1" y2="0">
        <stop offset="0" stopColor="#2f66b4" />
        <stop offset="1" stopColor="#52b9ea" />
      </linearGradient>
      <linearGradient id="swirlGreen" x1="0" y1="1" x2="1" y2="0">
        <stop offset="0" stopColor="#e8dc30" />
        <stop offset=".5" stopColor="#54b85c" />
        <stop offset="1" stopColor="#45b878" />
      </linearGradient>
    </defs>
    <path d="M130 3C80 0 0 36 2 72c2 18 14 22 30 20-14-8-14-26-2-42C48 28 90 12 130 3z" fill="url(#swirlBlue)" />
    <path d="M108 16C62 22 20 46 22 70c2 20 26 26 50 10-16 4-28-2-26-14 4-18 34-34 62-50z" fill="url(#swirlBlue)" />
    <path d="M66 52c26-14 60-8 58 16-4 28-58 48-112 48 32-6 80-20 82-44 0-14-12-22-28-20z" fill="url(#swirlGreen)" />
    <path d="M28 92c18 10 52 0 60-26-16 18-36 26-60 26z" fill="#4b9fd8" />
  </svg>
);

/* ---------- data ---------- */

const TABS = ['文件', '开始', '我的模板', '插入', '页面布局', '公式', '数据', '审阅', '视图', '开发工具', 'PDF工具集'];

const STYLES = [
  { name: '差_Sheet4', bg: '#ff99cc', fg: '#800080' },
  { name: '好_Sheet4', bg: '#ccffcc', fg: '#008000' },
  { name: '千位分隔 2' },
  { name: '常规', selected: true },
  { name: '差', bg: '#ffc7ce', fg: '#9c0006' },
  { name: '好', bg: '#c6efce', fg: '#006100' },
];

const COLUMNS = [
  ['A', 156], ['B', 187], ['C', 148], ['D', 148], ['E', 148], ['F', 148],
  ['G', 148], ['H', 148], ['I', 148], ['J', 148], ['K', 148], ['', null],
];

const DATES = ['日期', '2022年12月20日', '2023年1月31日', '2023年2月5日', '2023年3月10日', '2023年10月1日'];

const ROWS = Array.from({ length: 22 }, (_, i) => ({
  number: i + 1,
  height: { 10: 26, 13: 32 }[i + 1] || 33,
  value: DATES[i] || '',
  selected: i > 0 && i < 6,
}));

const SHEETS = ['成绩表', '员工信息', '田字格', 'XXX公司销售额', '课程表', 'Sheet5'];

const STATS = [
  '平均值: 2023年3月20日',
  '计数: 5',
  '数值计数: 5',
  '最小值: 2022年12月20日',
  '最大值: 2023年10月1日',
  '求和: 2516年2月8日',
];

const TOP = [[1, 13, 1], [0, 14, 4], [1, 13, 7]];
const MIDDLE = [[1, 13, 4], [0, 14, 7], [1, 13, 10]];
const BOTTOM = [[1, 13, 9], [0, 14, 12], [1, 13, 15]];
const LEFT = [[0, 14, 2], [0, 9, 5], [0, 14, 8], [0, 9, 11]];
const CENTER = [[0, 14, 2], [3, 11, 5], [0, 14, 8], [3, 11, 11]];
const RIGHT = [[0, 14, 2], [5, 14, 5], [0, 14, 8], [5, 14, 11]];

/* ---------- sections ---------- */

const SortMenu = () => (
  <Menu role="menu">
    <MenuItem role="menuitem" $hover>
      <SortIcon top="A" bottom="Z" topColor={BLUE} bottomColor="#9158b4" />
      <span>升序(<u>S</u>)</span>
    </MenuItem>
    <MenuItem role="menuitem">
      <SortIcon top="Z" bottom="A" topColor="#9158b4" bottomColor={BLUE} />
      <span>降序(<u>O</u>)</span>
    </MenuItem>
    <MenuItem role="menuitem"><CustomSortIcon /><span>自定义排序(<u>U</u>)...</span></MenuItem>
    <MenuLine />
    <MenuItem role="menuitem"><FunnelIcon /><span>筛选(<u>F</u>)</span></MenuItem>
    <MenuItem role="menuitem" disabled><FunnelIcon kind="clear" /><span>清除(<u>C</u>)</span></MenuItem>
    <MenuItem role="menuitem" disabled><FunnelIcon kind="reapply" /><span>重新应用(<u>Y</u>)</span></MenuItem>
    <Pointer><PointerIcon /></Pointer>
  </Menu>
);

const RibbonPanel = () => (
  <Ribbon>
    <Group width={55} label="文件传输" inset={0}>
      <BigButton $width={54} icon={<WechatIcon />} line1="发送" line2="到微信" />
    </Group>

    <Group width={117} label="剪贴板" launcher inset={3}>
      <BigButton $width={44} icon={<PasteIcon />} line1="粘贴" caret />
      <Stack>
        <SmallButton $left={2}><CutIcon />剪切</SmallButton>
        <SmallButton $left={2} $gap={7}><CopyIcon />复制<Caret /></SmallButton>
        <SmallButton $left={2}><BrushIcon />格式刷</SmallButton>
      </Stack>
    </Group>

    <Group width={250} label="字体" launcher>
      <Stack $top={4}>
        <ToolRow>
          <Combo $width={157}>
            <select aria-label="字体"><option>等线</option></select>
            <Caret />
          </Combo>
          <Combo $width={40}>
            <select aria-label="字号"><option>14</option></select>
            <Caret />
          </Combo>
          <Tool aria-label="增大字号"><FontSizeGlyph size={14} /></Tool>
          <Tool aria-label="减小字号"><FontSizeGlyph size={12} down /></Tool>
        </ToolRow>
        <ToolRow>
          <Tool><Letter>B</Letter></Tool>
          <Tool><Letter $italic $size={14}>I</Letter></Tool>
          <Tool><Letter $underline>U</Letter></Tool>
          <CaretTool aria-label="下划线"><Caret /></CaretTool>
          <Divider />
          <Tool aria-label="边框"><BorderIcon /></Tool>
          <CaretTool aria-label="边框选项"><Caret /></CaretTool>
          <Divider />
          <Tool aria-label="填充颜色"><FillIcon /></Tool>
          <CaretTool aria-label="填充颜色选项"><Caret /></CaretTool>
          <Tool><FontColor>A</FontColor></Tool>
          <CaretTool aria-label="字体颜色选项"><Caret /></CaretTool>
          <Divider />
          <Tool><Phonetic>wén<b>文</b></Phonetic></Tool>
          <CaretTool aria-label="拼音选项"><Caret /></CaretTool>
        </ToolRow>
      </Stack>
    </Group>

    <Group width={239} label="对齐方式" launcher>
      <Stack $top={4}>
        <ToolRow>
          <Tool aria-label="顶端对齐"><LinesIcon lines={TOP} /></Tool>
          <Tool aria-label="垂直居中" $active><LinesIcon lines={MIDDLE} /></Tool>
          <Tool aria-label="底端对齐"><LinesIcon lines={BOTTOM} /></Tool>
          <Divider />
          <Tool aria-label="方向"><OrientationIcon /></Tool>
          <CaretTool aria-label="方向选项"><Caret /></CaretTool>
        </ToolRow>
        <ToolRow>
          <Tool aria-label="左对齐"><LinesIcon lines={LEFT} /></Tool>
          <Tool aria-label="居中" $active><LinesIcon lines={CENTER} /></Tool>
          <Tool aria-label="右对齐"><LinesIcon lines={RIGHT} /></Tool>
          <Divider />
          <Tool aria-label="减少缩进"><IndentIcon /></Tool>
          <Tool aria-label="增加缩进"><IndentIcon flip /></Tool>
        </ToolRow>
      </Stack>
      <Stack $top={6}><Divider $height={54} /></Stack>
      <Stack $top={4}>
        <ToolRow><SmallButton><WrapIcon />自动换行</SmallButton></ToolRow>
        <ToolRow><SmallButton $gap={7}><MergeIcon />合并后居中<Caret /></SmallButton></ToolRow>
      </Stack>
    </Group>

    <Group width={140} label="数字" launcher>
      <Stack $top={4}>
        <ToolRow>
          <Combo $width={131}>
            <select aria-label="数字格式"><option>自定义</option></select>
            <Caret />
          </Combo>
        </ToolRow>
        <ToolRow>
          <Tool aria-label="会计数字格式"><CurrencyIcon /></Tool>
          <CaretTool aria-label="会计格式选项"><Caret /></CaretTool>
          <Tool><NumberSign>%</NumberSign></Tool>
          <Tool><NumberSign $bold>,</NumberSign></Tool>
          <Divider />
          <Tool aria-label="增加小数位数"><DecimalIcon /></Tool>
          <Tool aria-label="减少小数位数"><DecimalIcon less /></Tool>
        </ToolRow>
      </Stack>
    </Group>

    <Group width={463} label="样式">
      <BigButton $width={52} icon={<CondFormatIcon />} line1="条件格式" caret />
      <BigButton $width={64} icon={<TableFormatIcon />} line1="套用" line2="表格格式" caret />
      <Gallery>
        <StyleGrid>
          {STYLES.map(({ name, bg, fg, selected }) => (
            <StyleCell key={name} $bg={bg} $fg={fg} $selected={selected}>{name}</StyleCell>
          ))}
        </StyleGrid>
        <GallerySide>
          <button disabled aria-label="上一行"><UpCaret $color="#b4b4b4" /></button>
          <button aria-label="下一行"><Caret /></button>
          <button aria-label="其他"><Bar /><Caret /></button>
        </GallerySide>
      </Gallery>
    </Group>

    <Group width={135} label="单元格">
      <BigButton $width={42} icon={<InsertCellsIcon />} line1="插入" caret />
      <BigButton $width={42} icon={<DeleteCellsIcon />} line1="删除" caret />
      <BigButton $width={42} icon={<FormatCellsIcon />} line1="格式" caret />
    </Group>

    <Group width={229}>
      <Stack $width={90}>
        <SmallButton $gap={7}><SigmaIcon />自动求和<Caret /></SmallButton>
        <SmallButton><FillDownIcon />填充<Caret /></SmallButton>
        <SmallButton><EraserIcon />清除<Caret /></SmallButton>
      </Stack>
      <MenuAnchor>
        <BigButton $width={65} $active aria-expanded="true" icon={<SortFilterIcon />} line1="排序和筛选" caret />
        <SortMenu />
      </MenuAnchor>
      <BigButton $width={65} icon={<FindIcon />} line1="查找和选择" caret />
    </Group>

    <Group width={55} label="发票查验" inset={0}>
      <BigButton $width={54} icon={<InvoiceIcon />} line1="发票" line2="查验" />
    </Group>

    <CollapseButton aria-label="折叠功能区"><ChevronUpIcon /></CollapseButton>
  </Ribbon>
);

const Worksheet = () => (
  <SheetArea>
    <GridClip>
      <Grid>
        <colgroup>
          <col width={29} />
          {COLUMNS.map(([name, width]) => <col key={name} width={width} />)}
        </colgroup>
        <thead>
          <tr>
            <Corner aria-label="全选" />
            {COLUMNS.map(([name]) => (
              <ColumnHead key={name} scope="col" $selected={name === 'A'}>{name}</ColumnHead>
            ))}
          </tr>
        </thead>
        <tbody>
          {ROWS.map(({ number, height, value, selected }) => (
            <tr key={number}>
              <RowHead scope="row" $height={height} $selected={selected}>{number}</RowHead>
              {COLUMNS.map(([name], i) => (
                <Cell key={name} $shaded={i === 0 && selected && number > 2}>
                  {i === 0 && value}
                  {i === 0 && number === 2 && <Selection />}
                </Cell>
              ))}
            </tr>
          ))}
        </tbody>
      </Grid>
    </GridClip>
    <ScrollY>
      <ScrollButton aria-label="向上滚动"><UpCaret /></ScrollButton>
      <Thumb $margin="1px 0 35px" />
      <ScrollButton aria-label="向下滚动"><Caret /></ScrollButton>
    </ScrollY>
  </SheetArea>
);

const App = () => (
  <>
    <GlobalStyle />
    <Frame>
      <TitleBar>
        <Title>工作簿3.xlsx - Excel</Title>
        <WindowButtons>
          <button aria-label="功能区显示选项"><RibbonOptionsIcon /></button>
          <button aria-label="最小化"><MinimizeIcon /></button>
          <button aria-label="最大化"><MaximizeIcon /></button>
          <button aria-label="关闭"><CloseIcon /></button>
        </WindowButtons>
      </TitleBar>

      <TabBar>
        {TABS.map((tab, i) => (
          <Tab key={tab} $file={i === 0} $active={i === 1}>{tab}</Tab>
        ))}
        <TellMe>
          <BulbIcon />
          <input aria-label="操作说明搜索" placeholder="告诉我您想要做什么..." />
        </TellMe>
        <SignIn>登录</SignIn>
        <Share><ShareIcon />共享</Share>
      </TabBar>

      <RibbonPanel />

      <QuickBar>
        <QuickItem><Tool aria-label="保存"><SaveIcon /></Tool></QuickItem>
        <QuickItem>
          <Tool aria-label="恢复"><RedoIcon /></Tool>
          <CaretTool aria-label="恢复列表"><Caret $color="#c0c0c0" /></CaretTool>
        </QuickItem>
        <QuickItem>
          <Tool aria-label="撤消"><UndoIcon /></Tool>
          <CaretTool aria-label="撤消列表"><Caret /></CaretTool>
        </QuickItem>
        <QuickItem><Tool aria-label="打印预览"><PreviewIcon /></Tool></QuickItem>
        <CaretTool aria-label="自定义快速访问工具栏"><Caret $color="#f6f6f6" /></CaretTool>
      </QuickBar>

      <FormulaBar>
        <NameBox>
          <input aria-label="名称框" defaultValue="A2" />
          <Caret />
        </NameBox>
        <Grip $margin="8px 14px 0" />
        <FormulaButtons>
          <button aria-label="取消"><CrossIcon /></button>
          <button aria-label="输入"><CheckIcon /></button>
          <Fx aria-label="插入函数">f<sub>x</sub></Fx>
        </FormulaButtons>
        <FormulaField>
          <textarea aria-label="编辑栏" defaultValue="2022/12/20" />
          <button aria-label="折叠编辑栏"><ChevronUpIcon /></button>
        </FormulaField>
      </FormulaBar>

      <Worksheet />

      <SheetBar>
        <SheetNav>
          <SideCaret $dir="left" $color="#c0c0c0" />
          <SideCaret $dir="right" $color="#c0c0c0" />
        </SheetNav>
        {SHEETS.map((sheet) => (
          <SheetTab key={sheet} $active={sheet === 'Sheet5'}>{sheet}</SheetTab>
        ))}
        <AddSheet aria-label="新工作表"><PlusCircleIcon /></AddSheet>
        <Grip $margin="0 15px" />
        <ScrollX>
          <ScrollButton aria-label="向左滚动"><SideCaret $dir="left" /></ScrollButton>
          <Thumb $margin="0 58px 0 0" />
          <ScrollButton aria-label="向右滚动"><SideCaret $dir="right" /></ScrollButton>
        </ScrollX>
      </SheetBar>

      <StatusBar>
        <StatusLeft>
          <span>就绪</span>
          <span>循环引用</span>
          <span>数字</span>
          <MacroIcon />
        </StatusLeft>
        <Stats>
          {STATS.map((stat) => <span key={stat}>{stat}</span>)}
        </Stats>
        <ViewButton $active aria-label="普通"><NormalViewIcon /></ViewButton>
        <ViewButton aria-label="页面布局"><LayoutViewIcon /></ViewButton>
        <ViewButton aria-label="分页预览"><BreakViewIcon /></ViewButton>
        <ZoomControl>
          <button aria-label="缩小">-</button>
          <input type="range" aria-label="显示比例" min="0" max="200" defaultValue="100" />
          <button aria-label="放大">+</button>
          <output>100%</output>
        </ZoomControl>
      </StatusBar>

      <Annotations aria-hidden="true">
        <Arrow from={[206, 165]} to={[108, 56]} />
        <Arrow from={[1419, 183]} to={[1496, 112]} />
        <Arrow from={[1477, 196]} to={[1498, 153]} />
        <Arrow from={[252, 444]} to={[209, 422]} />
      </Annotations>

      <Watermark>
        <SwirlLogo />
        <WatermarkText>
          极光下载站
          <small>www.xz7.com</small>
        </WatermarkText>
      </Watermark>
    </Frame>
  </>
);

export default App;
